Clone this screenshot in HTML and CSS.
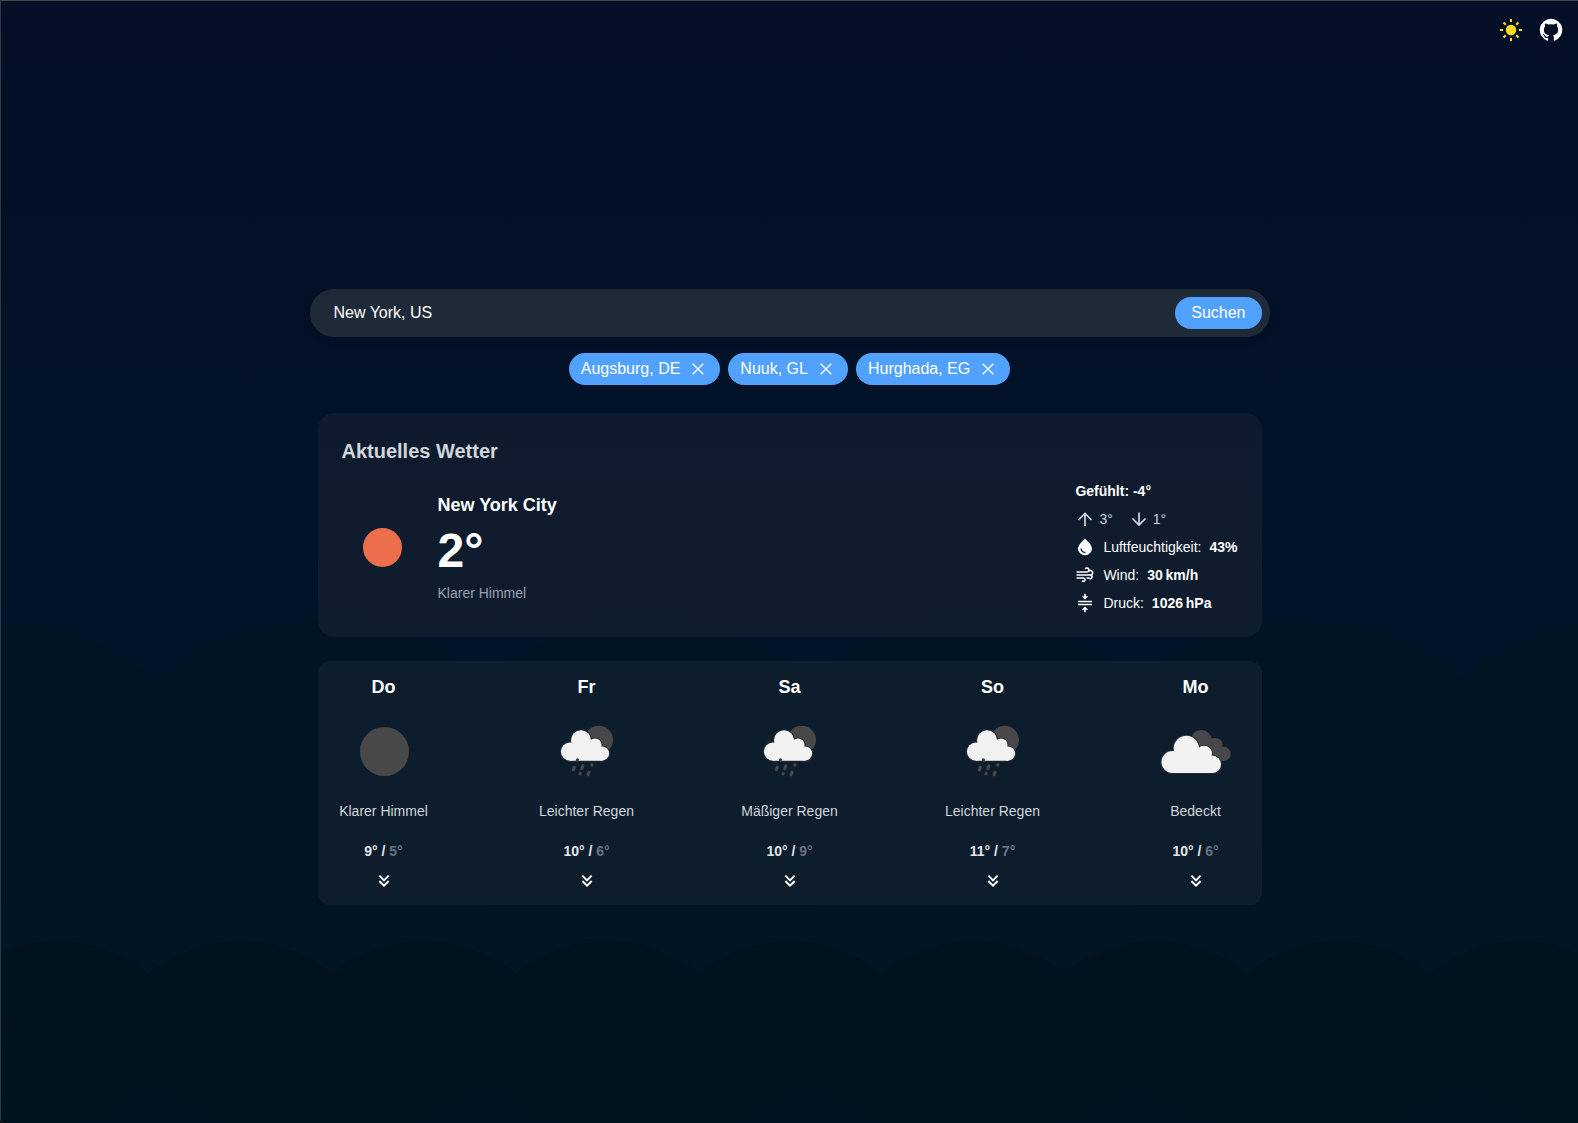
FILE: index.html
```html
<!DOCTYPE html>
<html lang="de">
<head>
<meta charset="utf-8">
<meta name="viewport" content="width=device-width, initial-scale=1">
<title>Wetter</title>
<link rel="stylesheet" href="styles.css">
</head>
<body>
<svg class="sprite" aria-hidden="true">
  <symbol id="close" viewBox="0 0 24 24"><path d="M4 4l16 16M20 4L4 20" fill="none" stroke="currentColor" stroke-width="2"/></symbol>
  <symbol id="more" viewBox="0 0 24 24"><path d="M5 4l7 7 7-7M5 12l7 7 7-7" fill="none" stroke="currentColor" stroke-width="3"/></symbol>
  <g id="small-cloud"><circle cx="14" cy="30.600" r="9.100"/><circle cx="25" cy="19.200" r="10"/><circle cx="39" cy="24" r="6.600"/><circle cx="46" cy="32.600" r="7.100"/><path d="M14 39.700h32V32l-7-12-14-4-11 12z"/></g>
  <g id="big-cloud"><circle cx="27.500" cy="61" r="11"/><circle cx="41.300" cy="47.300" r="12.600"/><circle cx="59" cy="52.700" r="8"/><circle cx="67.300" cy="63.300" r="8.700"/><path d="M27.500 72h39.800v-9L59 48l-18-4-13.500 13z"/></g>
  <symbol id="rain" viewBox="0 0 60 60">
    <circle cx="42.700" cy="19" r="14.300" fill="#48484a"/>
    <use href="#small-cloud" class="cloud-edge"/>
    <use href="#small-cloud" class="cloud"/>
    <path d="M18.300 46.300l-1 2.500M26.800 45l-1 2.500M33 51.200l-1 2.500M24.200 52.500l-.2.400M36 43.600l-.2.400" fill="none" stroke="#48484a" stroke-width="3.200" stroke-linecap="round"/>
    <path d="M21.500 38.600l-.3.900" stroke="#3a3a3c" stroke-width="2.800" stroke-linecap="round"/>
  </symbol>
</svg>
<div class="sky">
  <header class="topbar">
    <button class="icon-button sun" type="button" aria-label="Farbschema wechseln">
      <svg width="24" height="24" viewBox="0 0 24 24"><circle cx="12" cy="12" r="5.200" fill="currentColor"/><path d="M12 1v3M12 20v3M1 12h3M20 12h3M4.500 4.500l2.300 2.300M17.200 17.200l2.300 2.300M4.500 19.500l2.300-2.300M17.200 6.800l2.300-2.300" stroke="currentColor" stroke-width="2"/></svg>
    </button>
    <a class="icon-button" href="#" aria-label="GitHub">
      <svg width="24" height="24" viewBox="0 0 24 24"><path fill="currentColor" d="M12 .8a11.200 11.200 0 0 0-3.540 21.830c.56.100.77-.24.770-.54v-2.090c-3.120.68-3.770-1.320-3.770-1.320-.51-1.300-1.250-1.640-1.250-1.640-1.020-.7.080-.68.080-.68 1.130.08 1.720 1.160 1.720 1.160 1 1.720 2.630 1.220 3.270.93.100-.73.390-1.220.71-1.500-2.490-.28-5.100-1.240-5.100-5.540 0-1.220.44-2.220 1.150-3.010-.11-.28-.5-1.420.11-2.970 0 0 .94-.3 3.080 1.150a10.700 10.700 0 0 1 5.600 0c2.140-1.450 3.080-1.150 3.080-1.150.61 1.550.22 2.690.11 2.970.72.790 1.150 1.790 1.150 3.010 0 4.310-2.620 5.250-5.120 5.530.4.350.76 1.030.76 2.080v3.080c0 .3.200.65.770.54A11.200 11.200 0 0 0 12 .8z"/></svg>
    </a>
  </header>
  <main class="content">
    <form class="search">
      <input class="search-input" type="text" aria-label="Ort" value="New York, US">
      <button class="search-button" type="button">Suchen</button>
    </form>
    <ul class="chips">
      <li><button class="chip" type="button">Augsburg, DE<svg class="chip-x"><use href="#close"/></svg></button></li>
      <li><button class="chip" type="button">Nuuk, GL<svg class="chip-x"><use href="#close"/></svg></button></li>
      <li><button class="chip" type="button">Hurghada, EG<svg class="chip-x"><use href="#close"/></svg></button></li>
    </ul>
    <section class="card current">
      <h1 class="title">Aktuelles Wetter</h1>
      <div class="current-row">
        <div class="now">
          <svg class="now-icon" viewBox="0 0 80 80"><circle cx="40.500" cy="40.500" r="19.500" fill="#ec6e4c"/></svg>
          <div class="now-text">
            <h2 class="city">New York City</h2>
            <p class="temp">2°</p>
            <p class="condition">Klarer Himmel</p>
          </div>
        </div>
        <ul class="facts">
          <li class="fact"><b>Gefühlt: -4°</b></li>
          <li class="fact range">
            <svg class="fact-icon" viewBox="0 0 18 20"><path d="M10 17V4.500M3.500 11L10 4.500l6.500 6.500" fill="none" stroke="currentColor" stroke-width="1.700"/></svg><span class="high">3°</span>
            <svg class="fact-icon" viewBox="0 0 18 20"><path d="M10 3.500V16M3.500 9.500L10 16l6.500-6.500" fill="none" stroke="currentColor" stroke-width="1.700"/></svg><span>1°</span>
          </li>
          <li class="fact">
            <svg class="fact-icon wide" viewBox="0 0 20 20"><path d="M10 1.500C7.500 4.500 3 8 3 11.500a7 6.800 0 0 0 14 0C17 8 12.500 4.500 10 1.500z" fill="#fff"/><path d="M6 11.500a4.600 4.600 0 0 0 4.500 4" fill="none" stroke="#0e1c2d" stroke-width="1.300"/></svg>
            <span>Luftfeuchtigkeit:</span><b>43%</b>
          </li>
          <li class="fact">
            <svg class="fact-icon wide" viewBox="0 0 20 20"><path d="M1.500 7H12a2 2 0 1 0-1.800-3M1.500 10h14a2.200 2.200 0 1 0-1.900-3.300M1.500 13h7a1.700 1.700 0 1 1-1.500 2.800M14.500 13h-3M14.500 13.500a1.800 1.800 0 0 0 1.500-3.300" fill="none" stroke="currentColor" stroke-width="1.600"/></svg>
            <span>Wind:</span><b>30&#8201;km/h</b>
          </li>
          <li class="fact">
            <svg class="fact-icon wide" viewBox="0 0 20 20"><path d="M3 8.500h14M3 11.500h14" stroke="currentColor" stroke-width="1.700"/><path d="M9.200 .8h1.600v2.400h2.500L10 6.500 6.700 3.200h2.500zM9.200 19.200h1.600v-2.400h2.500L10 13.500l-3.300 3.300h2.500z" fill="currentColor"/></svg>
            <span>Druck:</span><b>1026&#8201;hPa</b>
          </li>
        </ul>
      </div>
    </section>
    <section class="card forecast" aria-label="Vorhersage">
      <article class="day">
        <h3 class="day-name">Do</h3>
        <svg class="day-icon" viewBox="0 0 100 100"><circle cx="50.500" cy="50.500" r="24.500" fill="#48484a"/></svg>
        <p class="day-text">Klarer Himmel</p>
        <p class="day-temp">9° / <span>5°</span></p>
        <button class="more" type="button" aria-label="Details Donnerstag"><svg><use href="#more"/></svg></button>
      </article>
      <article class="day">
        <h3 class="day-name">Fr</h3>
        <svg class="day-icon" viewBox="0 0 100 100"><use href="#rain" x="19" y="20" width="60" height="60"/></svg>
        <p class="day-text">Leichter Regen</p>
        <p class="day-temp">10° / <span>6°</span></p>
        <button class="more" type="button" aria-label="Details Freitag"><svg><use href="#more"/></svg></button>
      </article>
      <article class="day">
        <h3 class="day-name">Sa</h3>
        <svg class="day-icon" viewBox="0 0 100 100"><use href="#rain" x="19" y="20" width="60" height="60"/></svg>
        <p class="day-text">Mäßiger Regen</p>
        <p class="day-temp">10° / <span>9°</span></p>
        <button class="more" type="button" aria-label="Details Samstag"><svg><use href="#more"/></svg></button>
      </article>
      <article class="day">
        <h3 class="day-name">So</h3>
        <svg class="day-icon" viewBox="0 0 100 100"><use href="#rain" x="19" y="20" width="60" height="60"/></svg>
        <p class="day-text">Leichter Regen</p>
        <p class="day-temp">11° / <span>7°</span></p>
        <button class="more" type="button" aria-label="Details Sonntag"><svg><use href="#more"/></svg></button>
      </article>
      <article class="day">
        <h3 class="day-name">Mo</h3>
        <svg class="day-icon" viewBox="1 0 100 100">
          <g fill="#48484a"><circle cx="56.300" cy="39.500" r="10.500"/><circle cx="71.300" cy="43.500" r="6.200"/><circle cx="78.500" cy="52.800" r="7.200"/><path d="M56 38l15-1 7 23H62z"/></g>
          <use href="#big-cloud" class="cloud-edge"/>
          <use href="#big-cloud" class="cloud"/>
        </svg>
        <p class="day-text">Bedeckt</p>
        <p class="day-temp">10° / <span>6°</span></p>
        <button class="more" type="button" aria-label="Details Montag"><svg><use href="#more"/></svg></button>
      </article>
    </section>
  </main>
</div>
</body>
</html>
```
FILE: styles.css
```css
* { box-sizing: border-box; }
body, h1, h2, h3, p, ul { margin: 0; padding: 0; }
ul { list-style: none; }
button, input { font: inherit; color: inherit; border: 0; background: none; padding: 0; }
button { cursor: pointer; }
svg { display: block; }
.sprite { position: absolute; width: 0; height: 0; }

body {
  font-family: "Liberation Sans", Arial, sans-serif;
  font-size: 16px;
  line-height: 24px;
  color: #fff;
  background: #000;
}

/* Two rows of hills, each a repeated circle cut at the tile edge */
.sky {
  position: relative;
  display: flex;
  min-height: 100vh;
  padding: 134px 24px 64px;
  border-top: 1px solid #41464a;
  border-left: 1px solid #2c3a45;
  border-bottom-left-radius: 4px;
  background:
    radial-gradient(circle 147px at center, rgba(0, 17, 30, .88) 146px, transparent 147px) -35px 940px / 183px 294px repeat-x,
    radial-gradient(circle 260px at center, rgba(2, 20, 35, .8) 259px, transparent 260px) 155px 619px / 327px 520px repeat-x,
    linear-gradient(#020f26, #021329 50%, #03172b);
}

.topbar {
  position: absolute;
  top: 17px;
  right: 15px;
  display: flex;
  gap: 16px;
}
.icon-button { display: block; color: #fff; }
.sun { color: #fddc22; }

.content {
  width: 100%;
  max-width: 960px;
  margin: auto;
}

.search {
  display: flex;
  height: 48px;
  padding: 8px 8px 8px 24px;
  border-radius: 24px;
  background: #1f2a38;
  box-shadow: 0 4px 6px rgba(0, 0, 0, .1);
}
.search-input { flex: 1; min-width: 0; outline: 0; }
.search-button { padding: 0 16px; border-radius: 16px; background: #51a2ff; }

.chips { display: flex; flex-wrap: wrap; justify-content: center; gap: 8px; margin: 16px 0 28px; }
.chip {
  display: flex;
  align-items: center;
  gap: 10px;
  height: 32px;
  padding: 0 14px 0 12px;
  border-radius: 16px;
  background: #51a2ff;
}
.chip-x { width: 16px; height: 16px; }

.card { margin: 0 8px; background: rgba(32, 42, 56, .4); }
.current { padding: 24px; border-radius: 16px; }
.title { font-size: 20px; line-height: 28px; color: #d1d5dc; }
.current-row { display: flex; justify-content: space-between; gap: 24px; margin-top: 16px; }
.now { display: flex; align-items: center; gap: 16px; }
.now-icon { width: 80px; height: 80px; }
.city { font-size: 18px; line-height: 28px; }
.temp { margin: 8px 0; font-size: 48px; line-height: 48px; font-weight: 700; }
.condition { font-size: 14px; line-height: 20px; color: #99a1af; }

.facts { display: grid; gap: 8px; font-size: 14px; line-height: 20px; }
.fact { display: flex; gap: 8px; }
.fact-icon { width: 18px; height: 20px; }
.wide { width: 20px; }
.range { gap: 6px; color: #d1d5dc; }
.high { margin-right: 10px; }

.forecast {
  display: flex;
  justify-content: space-between;
  margin-top: 24px;
  padding: 12px 16px 16px;
  border-radius: 12px;
}
.day { display: flex; flex-direction: column; align-items: center; width: 100px; }
.day-name { font-size: 18px; line-height: 28px; }
.day-icon { width: 100px; height: 100px; }
.day-text { font-size: 14px; line-height: 20px; color: #d1d5dc; white-space: nowrap; }
.day-temp { margin-top: 20px; font-size: 14px; line-height: 20px; font-weight: 700; color: #e5e7eb; }
.day-temp span { color: #6a7282; }
.more { margin-top: 12px; }
.more svg { width: 16px; height: 16px; }
.cloud { fill: #f2f2f2; }
.cloud-edge { fill: #222b36; stroke: #222b36; stroke-width: 2px; }
```
